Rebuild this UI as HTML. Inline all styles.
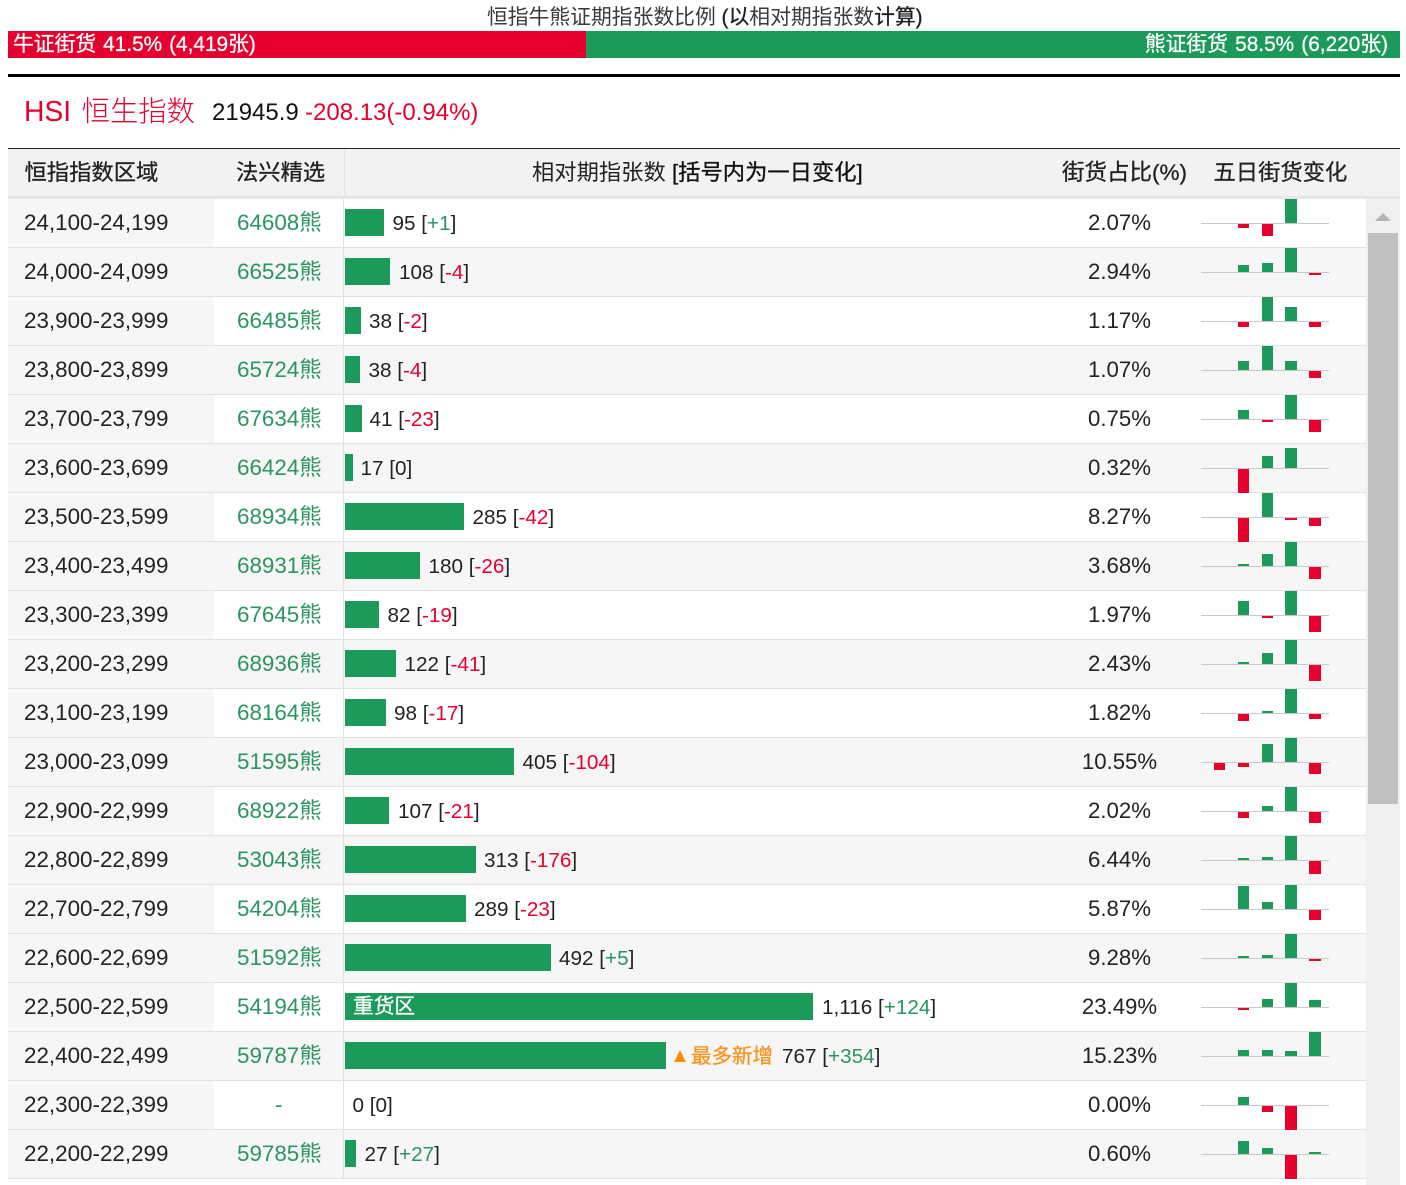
<!DOCTYPE html>
<html lang="zh"><head><meta charset="utf-8"><title>恒指牛熊证</title>
<style>
*{box-sizing:border-box}
html,body{margin:0;padding:0;background:#fff;width:1406px;height:1185px;overflow:hidden}
body{position:relative;font-family:"Liberation Sans","Noto Sans CJK SC",sans-serif;color:#222;font-size:22.4px}
.p{position:absolute;white-space:nowrap}
.R{color:#e6002d}.G{color:#2b9560}
.m{-webkit-text-stroke:.3px currentColor}
.r{position:absolute;left:8px;width:1358px;height:49px;background:#fff;border-bottom:1px solid #e2e2e2}
.r.o{background:#f6f6f6}
.r>.a{position:absolute;left:0;top:0;width:206px;height:48px;background:#f6f6f6;padding-left:16px;line-height:48px;white-space:nowrap}
.r>.b{position:absolute;left:229px;top:0;line-height:47px;color:#2b9560;white-space:nowrap}
.r>.v{position:absolute;left:335px;top:0;width:1px;height:48px;background:#e2e2e2}
.r>.n{position:absolute;top:0;line-height:49px;white-space:nowrap;font-size:20.7px}
.r>.w{position:absolute;left:337px;top:10px;height:27px;background:#1c9a5a;color:#fff;padding-left:8px;line-height:27px;white-space:nowrap;font-size:20.7px}
.r>.q{position:absolute;left:1011.5px;width:200px;top:0;text-align:center;line-height:47px;font-size:22.2px}
.s{position:absolute;left:1193px;top:0;width:128px;height:48px;background:linear-gradient(#c8c8c8,#c8c8c8) 0 24px/100% 1px no-repeat}
.s i{position:absolute;display:block}
.u{bottom:24px;background:#1c9a5a}.d{top:25px;background:#e6002d}
.c0{left:13px;width:11px}.c1{left:37px;width:11px}.c2{left:61px;width:11px}.c3{left:84px;width:12px}.c4{left:108px;width:12px}
.h{top:149.5px;line-height:46px;font-size:22.3px;color:#222}
</style></head><body>
<div class="p" style="left:487px;top:6px;font-size:20.8px;line-height:24px;color:#3a3a3a">恒指牛熊证期指张数比例 <span class="m" style="color:#222">(以</span>相对期指张数<span class="m" style="color:#222">计算)</span></div>
<div class="p m" style="left:8px;top:31px;width:578px;height:27px;background:#e6002d;color:#fff;padding-left:5px;line-height:28px;font-size:20.8px;word-spacing:1.2px">牛证街货 41.5% (4,419张)</div>
<div class="p m" style="left:586px;top:31px;width:814px;height:27px;background:#1c9a5a;color:#fff;padding-right:12px;text-align:right;line-height:28px;font-size:20.8px;word-spacing:1.4px">熊证街货 58.5% (6,220张)</div>
<div class="p" style="left:8px;top:74px;width:1392px;height:3px;background:#000"></div>
<div class="p R" style="left:24px;top:92px;font-size:28.3px;line-height:38px;font-weight:300">HSI<span style="margin-left:10.5px">恒生指数</span></div>
<div class="p" style="left:212px;top:97px;font-size:24px;line-height:32px;color:#111">21945.9</div>
<div class="p R" style="left:305px;top:97px;font-size:24px;line-height:32px">-208.13(-0.94%)</div>

<div class="p" style="left:8px;top:148px;width:1392px;height:51px;border-top:1px solid #222;border-bottom:3px solid #e6e6e6;background:repeating-conic-gradient(#efefef 0 25%,#f5f5f5 0 50%) 0 0/2px 2px"></div>
<div class="p" style="left:344px;top:149px;width:1px;height:47px;background:#e6e6e6"></div>
<div class="p h m" style="left:24.5px">恒指指数区域</div>
<div class="p h m" style="left:236px">法兴精选</div>
<div class="p h" style="left:532px">相对期指张数 <span class="m" style="color:#111">[括号内为一日变化]</span></div>
<div class="p h m" style="left:1062px;font-size:22.5px">街货占比(%)</div>
<div class="p h m" style="left:1213.5px">五日街货变化</div>

<div class="p" style="left:1366px;top:199px;width:34px;height:986px;background:#f0f0f0"></div>
<div class="p" style="left:1368px;top:233px;width:30px;height:571px;background:#bfbfbf"></div>
<div class="p" style="left:1375px;top:213px;width:0;height:0;border-left:8.5px solid transparent;border-right:8.5px solid transparent;border-bottom:8px solid #b4b4b4"></div>

<div class="r" style="top:199px"><div class="a">24,100-24,199</div><div class="b">64608熊</div><div class="v"></div><div class="w" style="width:39px"></div><div class="n" style="left:384.5px">95 [<span class="G">+1</span>]</div><div class="q">2.07%</div><div class="s"><i class="d c1" style="height:4px"></i><i class="d c2" style="height:12px"></i><i class="u c3" style="height:24px"></i></div></div>
<div class="r o" style="top:248px"><div class="a">24,000-24,099</div><div class="b">66525熊</div><div class="v"></div><div class="w" style="width:45px"></div><div class="n" style="left:391px">108 [<span class="R">-4</span>]</div><div class="q">2.94%</div><div class="s"><i class="u c1" style="height:7px"></i><i class="u c2" style="height:9px"></i><i class="u c3" style="height:24px"></i><i class="d c4" style="height:2px"></i></div></div>
<div class="r" style="top:297px"><div class="a">23,900-23,999</div><div class="b">66485熊</div><div class="v"></div><div class="w" style="width:16px"></div><div class="n" style="left:361px">38 [<span class="R">-2</span>]</div><div class="q">1.17%</div><div class="s"><i class="d c1" style="height:5px"></i><i class="u c2" style="height:24px"></i><i class="u c3" style="height:14px"></i><i class="d c4" style="height:5px"></i></div></div>
<div class="r o" style="top:346px"><div class="a">23,800-23,899</div><div class="b">65724熊</div><div class="v"></div><div class="w" style="width:15px"></div><div class="n" style="left:360.5px">38 [<span class="R">-4</span>]</div><div class="q">1.07%</div><div class="s"><i class="u c1" style="height:9px"></i><i class="u c2" style="height:24px"></i><i class="u c3" style="height:9px"></i><i class="d c4" style="height:7px"></i></div></div>
<div class="r" style="top:395px"><div class="a">23,700-23,799</div><div class="b">67634熊</div><div class="v"></div><div class="w" style="width:17px"></div><div class="n" style="left:361.5px">41 [<span class="R">-23</span>]</div><div class="q">0.75%</div><div class="s"><i class="u c1" style="height:9px"></i><i class="d c2" style="height:2px"></i><i class="u c3" style="height:24px"></i><i class="d c4" style="height:12px"></i></div></div>
<div class="r o" style="top:444px"><div class="a">23,600-23,699</div><div class="b">66424熊</div><div class="v"></div><div class="w" style="width:7px"></div><div class="n" style="left:352.5px">17 [0]</div><div class="q">0.32%</div><div class="s"><i class="d c1" style="height:24px"></i><i class="u c2" style="height:12px"></i><i class="u c3" style="height:20px"></i></div></div>
<div class="r" style="top:493px"><div class="a">23,500-23,599</div><div class="b">68934熊</div><div class="v"></div><div class="w" style="width:119px"></div><div class="n" style="left:464.5px">285 [<span class="R">-42</span>]</div><div class="q">8.27%</div><div class="s"><i class="d c1" style="height:24px"></i><i class="u c2" style="height:24px"></i><i class="d c3" style="height:2px"></i><i class="d c4" style="height:8px"></i></div></div>
<div class="r o" style="top:542px"><div class="a">23,400-23,499</div><div class="b">68931熊</div><div class="v"></div><div class="w" style="width:75px"></div><div class="n" style="left:420.5px">180 [<span class="R">-26</span>]</div><div class="q">3.68%</div><div class="s"><i class="u c1" style="height:2px"></i><i class="u c2" style="height:12px"></i><i class="u c3" style="height:24px"></i><i class="d c4" style="height:12px"></i></div></div>
<div class="r" style="top:591px"><div class="a">23,300-23,399</div><div class="b">67645熊</div><div class="v"></div><div class="w" style="width:34px"></div><div class="n" style="left:379.5px">82 [<span class="R">-19</span>]</div><div class="q">1.97%</div><div class="s"><i class="u c1" style="height:14px"></i><i class="d c2" style="height:2px"></i><i class="u c3" style="height:24px"></i><i class="d c4" style="height:16px"></i></div></div>
<div class="r o" style="top:640px"><div class="a">23,200-23,299</div><div class="b">68936熊</div><div class="v"></div><div class="w" style="width:51px"></div><div class="n" style="left:396.5px">122 [<span class="R">-41</span>]</div><div class="q">2.43%</div><div class="s"><i class="u c1" style="height:2px"></i><i class="u c2" style="height:11px"></i><i class="u c3" style="height:24px"></i><i class="d c4" style="height:16px"></i></div></div>
<div class="r" style="top:689px"><div class="a">23,100-23,199</div><div class="b">68164熊</div><div class="v"></div><div class="w" style="width:41px"></div><div class="n" style="left:386px">98 [<span class="R">-17</span>]</div><div class="q">1.82%</div><div class="s"><i class="d c1" style="height:7px"></i><i class="u c2" style="height:2px"></i><i class="u c3" style="height:24px"></i><i class="d c4" style="height:5px"></i></div></div>
<div class="r o" style="top:738px"><div class="a">23,000-23,099</div><div class="b">51595熊</div><div class="v"></div><div class="w" style="width:169px"></div><div class="n" style="left:514.5px">405 [<span class="R">-104</span>]</div><div class="q">10.55%</div><div class="s"><i class="d c0" style="height:7px"></i><i class="d c1" style="height:4px"></i><i class="u c2" style="height:18px"></i><i class="u c3" style="height:24px"></i><i class="d c4" style="height:11px"></i></div></div>
<div class="r" style="top:787px"><div class="a">22,900-22,999</div><div class="b">68922熊</div><div class="v"></div><div class="w" style="width:44px"></div><div class="n" style="left:390px">107 [<span class="R">-21</span>]</div><div class="q">2.02%</div><div class="s"><i class="d c1" style="height:6px"></i><i class="u c2" style="height:5px"></i><i class="u c3" style="height:24px"></i><i class="d c4" style="height:11px"></i></div></div>
<div class="r o" style="top:836px"><div class="a">22,800-22,899</div><div class="b">53043熊</div><div class="v"></div><div class="w" style="width:131px"></div><div class="n" style="left:476px">313 [<span class="R">-176</span>]</div><div class="q">6.44%</div><div class="s"><i class="u c1" style="height:2px"></i><i class="u c2" style="height:3px"></i><i class="u c3" style="height:24px"></i><i class="d c4" style="height:13px"></i></div></div>
<div class="r" style="top:885px"><div class="a">22,700-22,799</div><div class="b">54204熊</div><div class="v"></div><div class="w" style="width:121px"></div><div class="n" style="left:466px">289 [<span class="R">-23</span>]</div><div class="q">5.87%</div><div class="s"><i class="u c1" style="height:23px"></i><i class="u c2" style="height:7px"></i><i class="u c3" style="height:24px"></i><i class="d c4" style="height:10px"></i></div></div>
<div class="r o" style="top:934px"><div class="a">22,600-22,699</div><div class="b">51592熊</div><div class="v"></div><div class="w" style="width:206px"></div><div class="n" style="left:551px">492 [<span class="G">+5</span>]</div><div class="q">9.28%</div><div class="s"><i class="u c1" style="height:2px"></i><i class="u c2" style="height:3px"></i><i class="u c3" style="height:24px"></i><i class="d c4" style="height:2px"></i></div></div>
<div class="r" style="top:983px"><div class="a">22,500-22,599</div><div class="b">54194熊</div><div class="v"></div><div class="w m" style="width:468px">重货区</div><div class="n" style="left:814px">1,116 [<span class="G">+124</span>]</div><div class="q">23.49%</div><div class="s"><i class="d c1" style="height:2px"></i><i class="u c2" style="height:8px"></i><i class="u c3" style="height:24px"></i><i class="u c4" style="height:7px"></i></div></div>
<div class="r o" style="top:1032px"><div class="a">22,400-22,499</div><div class="b">59787熊</div><div class="v"></div><div class="w" style="width:321px"></div><div style="position:absolute;left:666px;top:18px;width:0;height:0;border-left:6px solid transparent;border-right:6px solid transparent;border-bottom:12px solid #fb8c0a"></div><div class="n m" style="left:683px;color:#f7941d;font-size:20.5px">最多新增</div><div class="n" style="left:774px">767 [<span class="G">+354</span>]</div><div class="q">15.23%</div><div class="s"><i class="u c1" style="height:6px"></i><i class="u c2" style="height:6px"></i><i class="u c3" style="height:5px"></i><i class="u c4" style="height:24px"></i></div></div>
<div class="r" style="top:1081px"><div class="a">22,300-22,399</div><div class="b" style="left:267px">-</div><div class="v"></div><div class="n" style="left:344.5px">0 [0]</div><div class="q">0.00%</div><div class="s"><i class="u c1" style="height:8px"></i><i class="d c2" style="height:6px"></i><i class="d c3" style="height:24px"></i></div></div>
<div class="r o" style="top:1130px"><div class="a">22,200-22,299</div><div class="b">59785熊</div><div class="v"></div><div class="w" style="width:11px"></div><div class="n" style="left:356.5px">27 [<span class="G">+27</span>]</div><div class="q">0.60%</div><div class="s"><i class="u c1" style="height:13px"></i><i class="u c2" style="height:6px"></i><i class="d c3" style="height:24px"></i><i class="u c4" style="height:2px"></i></div></div>
</body></html>
